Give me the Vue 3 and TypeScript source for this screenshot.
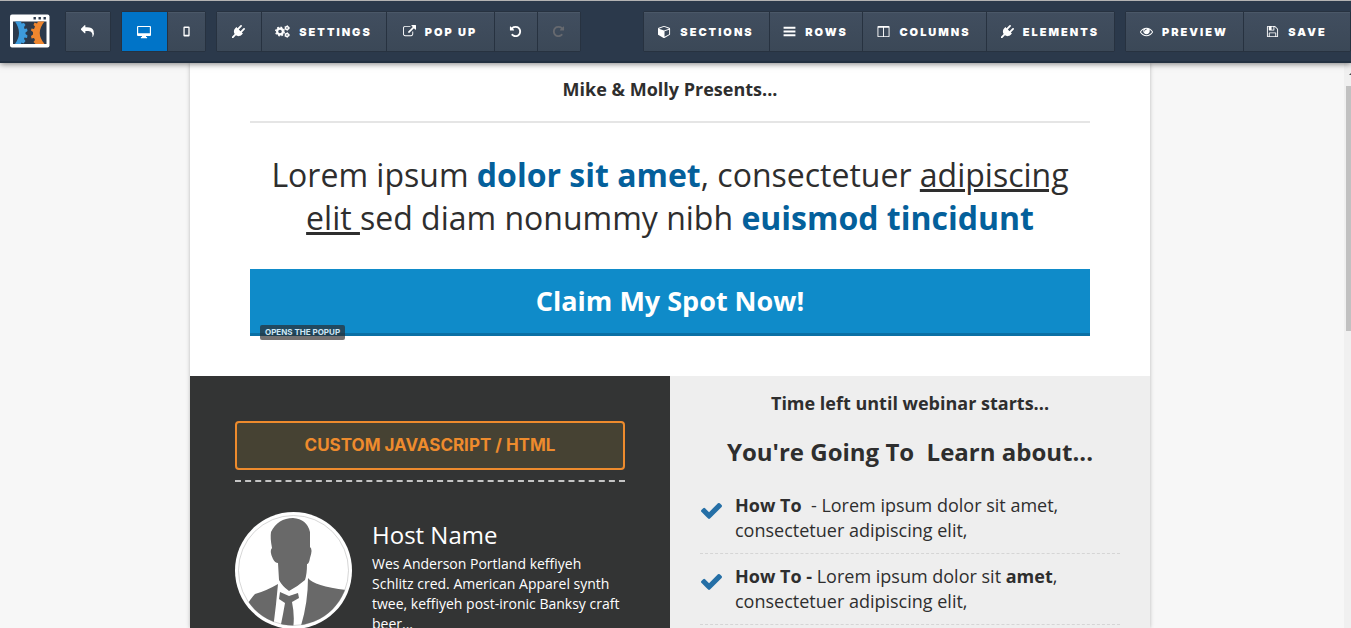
<script setup lang="ts">
interface Tool {
  label: string
  text?: string
  icon: string
  size: string
  state?: string
}

const device: Tool[] = [
  { label: 'Desktop view', icon: 'desktop', size: 'w-desktop', state: 'active' },
  { label: 'Mobile view', icon: 'mobile', size: 'w-mobile' },
]
const page: Tool[] = [
  { label: 'Integrations', icon: 'plug', size: 'w-plug' },
  { label: 'Settings', text: 'SETTINGS', icon: 'cogs', size: 'w-settings' },
  { label: 'Pop up', text: 'POP UP', icon: 'external', size: 'w-popup' },
  { label: 'Undo', icon: 'undo', size: 'w-undo' },
  { label: 'Redo', icon: 'redo', size: 'w-redo', state: 'faded' },
]
const build: Tool[] = [
  { label: 'Sections', text: 'SECTIONS', icon: 'cube', size: 'w-sections' },
  { label: 'Rows', text: 'ROWS', icon: 'bars', size: 'w-rows' },
  { label: 'Columns', text: 'COLUMNS', icon: 'columns', size: 'w-columns' },
  { label: 'Elements', text: 'ELEMENTS', icon: 'plug', size: 'w-elements' },
]
const publish: Tool[] = [
  { label: 'Preview', text: 'PREVIEW', icon: 'eye', size: 'w-preview' },
  { label: 'Save', text: 'SAVE', icon: 'save', size: 'w-save' },
]
const back: Tool[] = [{ label: 'Back', icon: 'reply', size: 'w-back' }]

const left = [back, device, page]
const right = [build, publish]

const undo =
  'M1664 896q0 156-61 298t-164 245-245 164-298 61q-172 0-327-72.5t-264-204.5q-7-10-6.5-22.5t8.5-20.5l137-138q10-9 25-9 16 2 23 12 73 95 179 147t225 52q104 0 198.5-40.5t163.5-109.5 109.5-163.5 40.5-198.5-40.5-198.5-109.5-163.5-163.5-109.5-198.5-40.5q-98 0-188 35.5t-160 101.5l137 138q31 30 14 69-17 40-59 40h-448q-26 0-45-19t-19-45v-448q0-42 40-59 39-17 69 14l130 129q107-101 244.5-156.5t284.5-55.5q156 0 298 61t245 164 164 245 61 298z'

const icons: Record<string, string> = {
  reply:
    'M1792 1120q0 166-127 451-3 7-10.5 24t-13.5 30-13 22q-12 17-28 17-15 0-23.5-10t-8.5-25q0-9 2.5-26.5t2.5-23.5q5-68 5-123 0-112-19.5-200.5t-54-153.5-89-112-115-78.5-140-49-157.5-22.5-175-6.5h-224v256q0 26-19 45t-45 19-45-19l-512-512q-19-19-19-45t19-45l512-512q19-19 45-19t45 19 19 45v256h224q713 0 875 403 53 134 53 333z',
  desktop:
    'M130 130H1662Q1792 130 1792 260V1290Q1792 1420 1662 1420H1160V1540H1290V1700H500V1540H630V1420H130Q0 1420 0 1290V260Q0 130 130 130ZM150 270V1060H1642V270Z',
  mobile:
    'M620 200H1180Q1330 200 1330 350V1450Q1330 1600 1180 1600H620Q470 1600 470 1450V350Q470 200 620 200ZM650 420V1330H1150V420Z',
  plug:
    'M1755 453q37 38 37 90.5t-37 90.5l-401 400 150 150-160 160q-163 163-389.5 186.5t-411.5-100.5l-362 362h-181v-181l362-362q-124-185-100.5-411.5t186.5-389.5l160-160 150 150 400-401q38-37 91-37t90 37 37 90.5-37 90.5l-400 401 234 234 401-400q38-37 91-37t90 37z',
  external:
    'M1408 928v320q0 119-84.5 203.5t-203.5 84.5h-832q-119 0-203.5-84.5t-84.5-203.5v-832q0-119 84.5-203.5t203.5-84.5h704q14 0 23 9t9 23v64q0 14-9 23t-23 9h-704q-66 0-113 47t-47 113v832q0 66 47 113t113 47h832q66 0 113-47t47-113v-320q0-14 9-23t23-9h64q14 0 23 9t9 23zm384-864v512q0 26-19 45t-45 19-45-19l-176-176-652 652q-10 10-23 10t-23-10l-114-114q-10-10-10-23t10-23l652-652-176-176q-19-19-19-45t19-45 45-19h512q26 0 45 19t19 45z',
  undo,
  redo: undo,
  cube:
    'M896 1629l640-349v-636l-640 233v752zm-64-865l698-254-698-254-698 254zm832-252v768q0 35-18 65t-49 47l-704 384q-28 16-61 16t-61-16l-704-384q-31-17-49-47t-18-65v-768q0-40 23-73t61-47l704-256q22-8 44-8t44 8l704 256q38 14 61 47t23 73z',
  bars:
    'M80 256H1712V512H80ZM80 768H1712V1024H80ZM80 1280H1712V1536H80Z',
  columns:
    'M190 128H1602Q1728 128 1728 254V1538Q1728 1664 1602 1664H190Q64 1664 64 1538V254Q64 128 190 128ZM192 384V1536H832V384ZM960 384V1536H1600V384Z',
  eye:
    'M1664 960q-152-236-381-353 61 104 61 225 0 185-131.5 316.5t-316.5 131.5-316.5-131.5-131.5-316.5q0-121 61-225-229 117-381 353 133 205 333.5 326.5t434.5 121.5 434.5-121.5 333.5-326.5zm-720-384q0-20-14-34t-34-14q-125 0-214.5 89.5t-89.5 214.5q0 20 14 34t34 14 34-14 14-34q0-86 61-147t147-61q20 0 34-14t14-34zm848 384q0 34-20 69-140 230-376.5 368.5t-499.5 138.5-499.5-139-376.5-368q-20-35-20-69t20-69q140-229 376.5-368t499.5-139 499.5 139 376.5 368q20 35 20 69z',
  save:
    'M512 1536h768v-384h-768v384zm896 0h128v-896q0-14-10-38.5t-20-34.5l-281-281q-10-10-34-20t-39-10v416q0 40-28 68t-68 28h-576q-40 0-68-28t-28-68v-416h-128v1280h128v-416q0-40 28-68t68-28h832q40 0 68 28t28 68v416zm-384-928v-320q0-13-9.5-22.5t-22.5-9.5h-192q-13 0-22.5 9.5t-9.5 22.5v320q0 13 9.5 22.5t22.5 9.5h192q13 0 22.5-9.5t9.5-22.5zm640 32v928q0 40-28 68t-68 28h-1344q-40 0-68-28t-28-68v-1344q0-40 28-68t68-28h928q40 0 88 20t76 48l280 280q28 28 48 76t20 88z',
}

const check =
  'M1671 566q0 40-28 68l-724 724-136 136q-28 28-68 28t-68-28l-136-136-362-362q-28-28-28-68t28-68l136-136q28-28 68-28t68 28l294 295 656-657q28-28 68-28t68 28l136 136q28 28 28 68z'
</script>

<template>
  <div class="editor">
    <header class="topbar">
      <a class="logo" href="#" aria-label="Home">
        <svg viewBox="0 0 40 34" width="40" height="34">
          <rect y="0.5" width="39.5" height="33" rx="2" fill="#fff" />
          <rect x="3" y="7.5" width="33.5" height="22.5" fill="#2b394b" />
          <path d="M23.5 3h2.4v2.4h-2.4zM28.5 3h2.4v2.4h-2.4zM33.5 3h2.4v2.4h-2.4z" fill="#2b394b" />
          <path
            d="M5 7.500H11L11.500 9.500L14 9L15.500 11L14 13L14.500 15L17 14.500L17.500 17L15.500 18.500V20L17.500 21.500L17 24L14.500 23.500L14 25L15.500 27L13.500 29.500L11.500 28.500L11 30H5Q13 19 5 7.500Z"
            fill="#3d9bdc"
          />
          <path
            d="M34.500 7.500H28L27 9.500L24.500 8.500L23.500 11L25 12.500L24 15L21.500 14.500L21 16.500L23 18V20.500L21 22L21.500 24.500L24 24L25 26L23.500 28L25.500 30H34.500Q25 19 34.500 7.500Z"
            fill="#ee862f"
          />
        </svg>
      </a>
      <nav class="side" aria-label="Page tools">
        <div v-for="(group, g) in left" :key="g" class="group">
          <button
            v-for="t in group"
            :key="t.label"
            type="button"
            class="tool"
            :class="[t.size, t.state]"
            :aria-label="t.label"
          >
            <svg v-if="t.icon === 'cogs'" class="icon wide" viewBox="0 0 15 13" fill="none" stroke="currentColor">
              <circle cx="5" cy="6.5" r="2.9" stroke-width="2.2" />
              <circle cx="5" cy="6.5" r="4.3" stroke-width="1.4" stroke-dasharray="1.7 1.68" />
              <circle cx="12" cy="3" r="1.5" stroke-width="1.4" />
              <circle cx="12" cy="3" r="2.4" stroke-width=".8" stroke-dasharray="1.2 1.3" />
              <circle cx="12" cy="10" r="1.5" stroke-width="1.4" />
              <circle cx="12" cy="10" r="2.4" stroke-width=".8" stroke-dasharray="1.2 1.3" />
            </svg>
            <svg v-else class="icon" :class="t.icon" viewBox="0 0 1792 1792">
              <path :d="icons[t.icon]" fill="currentColor" fill-rule="evenodd" />
            </svg>
            <span v-if="t.text">{{ t.text }}</span>
          </button>
        </div>
      </nav>
      <nav class="side end" aria-label="Build tools">
        <div v-for="(group, g) in right" :key="g" class="group">
          <button v-for="t in group" :key="t.label" type="button" class="tool" :class="t.size">
            <svg class="icon" :class="t.icon" viewBox="0 0 1792 1792">
              <path :d="icons[t.icon]" fill="currentColor" fill-rule="evenodd" />
            </svg>
            <span>{{ t.text }}</span>
          </button>
        </div>
      </nav>
    </header>

    <div class="workspace">
      <main class="sheet">
        <section class="hero">
          <p class="presents">Mike &amp; Molly Presents...</p>
          <hr class="rule" />
          <h1 class="headline">
            Lorem ipsum <b>dolor sit amet</b>, consectetuer <u>adipiscing elit </u>sed diam nonummy nibh
            <b>euismod tincidunt</b>
          </h1>
          <div class="cta-wrap">
            <button type="button" class="cta">Claim My Spot Now!</button>
            <span class="tag">OPENS THE POPUP</span>
          </div>
        </section>
        <div class="split">
          <section class="host-side">
            <div class="custom">CUSTOM JAVASCRIPT / HTML</div>
            <hr class="dashes" />
            <div class="host">
              <svg class="avatar" viewBox="0 0 117 117" role="img" aria-label="Host portrait">
                <defs>
                  <clipPath id="portrait"><circle cx="58.5" cy="58.5" r="55" /></clipPath>
                </defs>
                <circle cx="58.5" cy="58.5" r="58.5" fill="#fff" />
                <circle cx="58.5" cy="58.5" r="55" fill="#fff" stroke="#bbb" stroke-width=".6" />
                <g clip-path="url(#portrait)" fill="#696969">
                  <path
                    d="M36 20Q43 6 58 6Q72 7 75 20V35Q78 37 75 46Q74 52 72 52Q72 62 70 68Q62 75 54 79Q47 74 44 68L43 51Q40 51 38 47Q34 39 37 36Q35 26 36 20Z"
                  />
                  <path d="M43 72Q41 95 38 117H10V96Q16 86 20 82Q31 79 43 72Z" />
                  <path d="M73 66Q79 74 111 78V117H65Q73 92 73 66Z" />
                  <path d="M45 80L54 84L63 81L64 86L57 90Q60 104 58 117H45Q48 103 50 91L44 87Z" />
                </g>
              </svg>
              <div class="bio">
                <h2>Host Name</h2>
                <p>
                  Wes Anderson Portland keffiyeh Schlitz cred. American Apparel synth twee, keffiyeh post-ironic Banksy
                  craft beer...
                </p>
              </div>
            </div>
          </section>
          <section class="learn">
            <p class="countdown">Time left until webinar starts...</p>
            <h2 class="learn-title">You're Going To&nbsp; Learn about...</h2>
            <ul class="points">
              <li>
                <svg class="check" viewBox="121 270 1550 1252"><path :d="check" fill="#256fa6" /></svg>
                <span><b>How To&nbsp;</b> - Lorem ipsum dolor sit amet, consectetuer adipiscing elit,</span>
              </li>
              <li>
                <svg class="check" viewBox="121 270 1550 1252"><path :d="check" fill="#256fa6" /></svg>
                <span><b>How To - </b>Lorem ipsum dolor sit <b>amet</b>, consectetuer adipiscing elit,</span>
              </li>
            </ul>
          </section>
        </div>
      </main>
      <div class="scroll" aria-hidden="true">
        <svg class="arrow" viewBox="0 0 7 4"><path d="M3 4L7 0V4Z" fill="#444" /></svg>
        <div class="thumb"></div>
      </div>
    </div>
  </div>
</template>

<style>
body {
  margin: 0;
  overflow: hidden;
}
</style>

<style scoped>
.editor {
  height: 100vh;
  display: flex;
  flex-direction: column;
  overflow: hidden;
  background: #f7f7f7;
  font-family: 'Open Sans', sans-serif;
  color: #2e2e2e;
}
.editor * {
  box-sizing: border-box;
}
.topbar {
  position: relative;
  z-index: 2;
  flex: none;
  height: 63px;
  display: flex;
  align-items: center;
  padding-left: 10px;
  background: #2b394b;
  border-top: 1px solid #b3b3b3;
  border-bottom: 2px solid #223040;
  box-shadow: 0 1px 6px rgba(0, 0, 0, 0.5);
}
.logo {
  display: flex;
  margin-right: 15px;
}
.side {
  display: flex;
  gap: 10px;
}
.end {
  margin-left: auto;
}
.group {
  display: flex;
  border: 1px solid #273240;
  border-radius: 2px;
}
.tool {
  display: flex;
  align-items: center;
  justify-content: center;
  gap: 9px;
  height: 39px;
  padding: 1px 1px 0 0;
  border: 0;
  border-right: 1px solid #273240;
  background: linear-gradient(#414e5f, #3b4857);
  box-shadow: inset 0 1px 0 #4b5868;
  color: #fff;
  font-family: Inter, sans-serif;
  font-size: 11px;
  font-weight: 900;
  line-height: 16px;
  letter-spacing: 2px;
  white-space: nowrap;
}
.tool:last-child {
  border-right: 0;
}
.active {
  background: #0074c8;
  box-shadow: none;
}
.faded {
  color: #66696f;
}
.w-back {
  width: 44px;
}
.w-plug {
  width: 45px;
}
.w-desktop {
  width: 46px;
}
.w-mobile {
  width: 37px;
}
.w-undo {
  width: 43px;
}
.w-redo {
  width: 42px;
}
.w-settings {
  width: 125px;
}
.w-popup {
  width: 108px;
}
.w-sections {
  width: 126px;
}
.w-rows {
  width: 93px;
}
.w-columns {
  width: 124px;
}
.w-elements {
  width: 127px;
}
.w-preview {
  width: 118px;
}
.w-save {
  width: 106px;
}
.icon {
  flex: none;
  width: 13px;
  height: 13px;
}
.wide {
  width: 15px;
}
.desktop {
  width: 14px;
  height: 14px;
}
.redo {
  transform: scaleX(-1);
}
.workspace {
  flex: 1;
  min-height: 0;
  display: flex;
  align-items: stretch;
}
.sheet {
  width: 960px;
  max-width: 100%;
  margin: 0 auto;
  background: #fff;
  box-shadow: 0 0 4px rgba(0, 0, 0, 0.25);
}
.hero {
  padding: 14px 60px 40px;
  text-align: center;
}
.presents {
  margin: 0;
  font-size: 18px;
  line-height: 24px;
  font-weight: 700;
}
.rule {
  margin: 20px 0 30px;
  border: 0;
  border-top: 2px solid #e5e5e5;
}
.headline {
  margin: 0;
  padding: 0 10px;
  font-size: 32px;
  line-height: 43px;
  font-weight: 400;
}
.headline b {
  color: #04609b;
  font-weight: 700;
}
.headline u {
  text-decoration-thickness: 3px;
}
.cta-wrap {
  position: relative;
  margin-top: 30px;
}
.cta {
  display: block;
  width: 100%;
  height: 67px;
  padding: 0 0 2px;
  border: 0;
  border-bottom: 3px solid #0b70a5;
  background: #0f8bc9;
  color: #fff;
  font-family: inherit;
  font-size: 27px;
  font-weight: 700;
}
.tag {
  position: absolute;
  left: 10px;
  bottom: -4px;
  height: 15px;
  padding: 0 5px;
  border-radius: 2px;
  background: rgba(44, 40, 40, 0.66);
  color: #cfe6f5;
  font-family: Inter, sans-serif;
  font-size: 8px;
  line-height: 15px;
  font-weight: 700;
}
.split {
  display: grid;
  grid-template-columns: 1fr 1fr;
  min-height: 280px;
}
.host-side {
  padding: 45px;
  background: #333434;
  color: #fff;
}
.custom {
  height: 49px;
  border: 2px solid #ee8b2d;
  border-radius: 4px;
  background: #464233;
  color: #ee8b2d;
  font-family: Inter, sans-serif;
  font-size: 17px;
  line-height: 45px;
  font-weight: 700;
  text-align: center;
}
.dashes {
  margin: 10px 0 30px;
  border: 0;
  border-top: 2px dashed #c5c5c5;
}
.host {
  display: flex;
  gap: 20px;
}
.avatar {
  flex: none;
  width: 117px;
  height: 117px;
}
.bio {
  padding-top: 6px;
}
.bio h2 {
  margin: 0;
  font-size: 24px;
  line-height: 34px;
  font-weight: 400;
}
.bio p {
  margin: 2px 0 0;
  font-size: 14px;
  line-height: 20px;
}
.learn {
  padding: 15px 30px;
  background: #eee;
}
.countdown {
  margin: 0;
  font-size: 18px;
  line-height: 24px;
  font-weight: 700;
  text-align: center;
}
.learn-title {
  margin: 20px 0 24px;
  font-size: 24px;
  line-height: 34px;
  font-weight: 700;
  text-align: center;
}
.points {
  margin: 0;
  padding: 0;
  list-style: none;
}
.points li {
  display: flex;
  align-items: flex-start;
  gap: 13px;
  padding: 0 40px 10px 1px;
  margin-bottom: 10px;
  border-bottom: 1px dashed #d5d5d5;
  font-size: 18px;
  line-height: 25px;
  font-weight: 400;
}
.points b {
  font-weight: 700;
}
.check {
  flex: none;
  width: 21px;
  height: 17px;
  margin-top: 9px;
}
.scroll {
  flex: none;
  width: 7px;
  margin-left: 4px;
  background: #f0f0f0;
}
.arrow {
  display: block;
  width: 7px;
  height: 4px;
  margin: 8px 0 11px 2px;
}
.thumb {
  height: 245px;
  margin-left: 2px;
  background: #c1c1c1;
}
</style>
